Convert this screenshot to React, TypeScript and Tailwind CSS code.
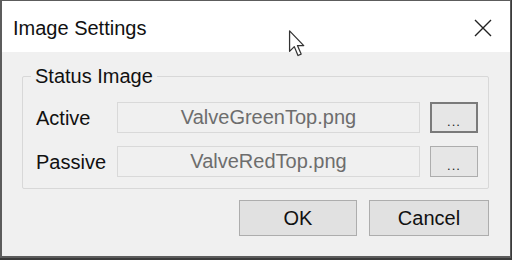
const FIELDS = [
  { label: 'Active', file: 'ValveGreenTop.png', focused: true },
  { label: 'Passive', file: 'ValveRedTop.png', focused: false },
]

export default function App() {
  return (
    <div className="w-[512px] h-[260px] bg-[#3a3a3a] overflow-hidden font-['Liberation_Sans',Arial,sans-serif]">
      <div className="relative w-[511px] h-[258px] border-l-2 border-t border-r border-b-2 border-[#5c5c5c] bg-[#f0f0f0] flex flex-col">
        {/* title bar */}
        <div className="h-[51px] bg-white flex items-center justify-between pl-[11px] pr-[18px] shrink-0">
          <span className="text-[20px] text-[#111] mt-[2px]">Image Settings</span>
          <svg width="18" height="18" viewBox="0 0 18 18" className="mt-[2px]">
            <path d="M1 1 L17 17 M17 1 L1 17" stroke="#222" strokeWidth="1.4" />
          </svg>
        </div>

        {/* group box */}
        <div className="relative mt-[24px] ml-[20px] w-[467px] h-[113px] border border-[#d8d8d8] rounded-[2px] pt-[24px] pl-[13px]">
          <span className="absolute -top-[13px] left-[8px] px-[4px] bg-[#f0f0f0] text-[20px] text-[#111] leading-[24px]">Status Image</span>
          <div className="flex flex-col gap-[12px]">
            {FIELDS.map(f => (
              <div key={f.label} className="flex items-center">
                <span className="w-[81px] text-[20px] text-[#111] mt-[2px]">{f.label}</span>
                <div className="w-[303px] h-[31px] border border-[#d9d9d9] bg-[#f0f0f0] flex items-center justify-center text-[20px] text-[#6d6d6d]">
                  {f.file}
                </div>
                <div
                  className={
                    f.focused
                      ? 'ml-[10px] w-[48px] h-[31px] border-2 border-[#7a7a7a] bg-[#e6e6e6] flex items-end justify-center pb-[3px]'
                      : 'ml-[10px] w-[48px] h-[31px] border border-[#adadad] bg-[#e6e6e6] flex items-end justify-center pb-[4px]'
                  }
                >
                  <span className="text-[13px] leading-none text-[#222] tracking-[1px]">...</span>
                </div>
              </div>
            ))}
          </div>
        </div>

        {/* buttons */}
        <div className="flex justify-end gap-[12px] mt-[11px] mr-[21px]">
          <button className="w-[118px] h-[36px] border border-[#adadad] bg-[#e1e1e1] text-[20px] text-[#111]">OK</button>
          <button className="w-[120px] h-[36px] border border-[#adadad] bg-[#e1e1e1] text-[20px] text-[#111]">Cancel</button>
        </div>

        {/* mouse pointer */}
        <svg className="absolute left-[286px] top-[28px]" width="21" height="30" viewBox="0 0 20 28">
          <path d="M1.5 1.5 L1.5 21 L6 16.5 L9.5 25 L12.5 23.6 L9 15.5 L15 15.5 Z" fill="#fff" stroke="#333" strokeWidth="1.2" strokeLinejoin="round" />
        </svg>
      </div>
    </div>
  )
}
